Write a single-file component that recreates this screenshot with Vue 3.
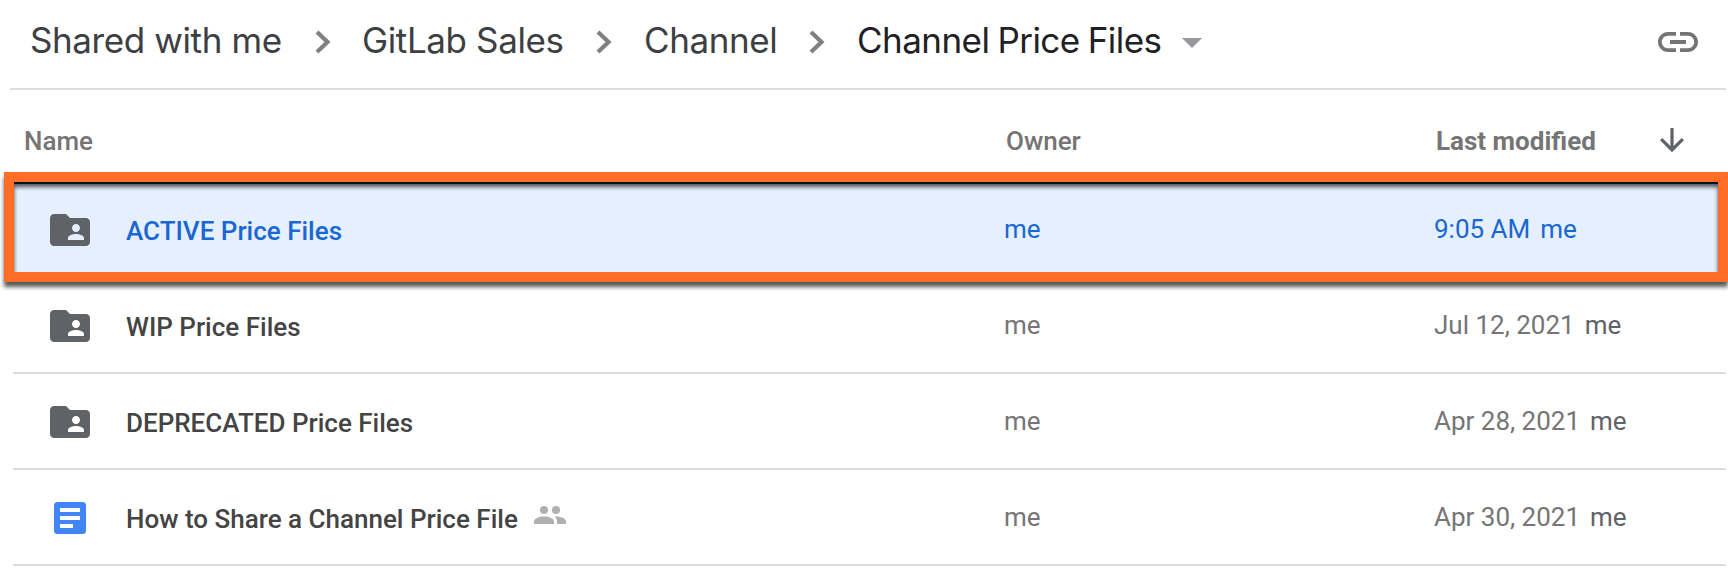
<script setup>
const crumbs = [
  { label: 'Shared with me', cls: 'c1' },
  { label: 'GitLab Sales', cls: 'c2' },
  { label: 'Channel', cls: 'c3' },
  { label: 'Channel Price Files', cls: 'c4' },
]
const files = [
  { name: 'ACTIVE Price Files', type: 'folder', owner: 'me', date: '9:05 AM', by: 'me', selected: true },
  { name: 'WIP Price Files', type: 'folder', owner: 'me', date: 'Jul 12, 2021', by: 'me' },
  { name: 'DEPRECATED Price Files', type: 'folder', owner: 'me', date: 'Apr 28, 2021', by: 'me' },
  { name: 'How to Share a Channel Price File', type: 'doc', owner: 'me', date: 'Apr 30, 2021', by: 'me', shared: true },
]
</script>

<template>
  <main class="drive">
    <header class="topbar">
      <nav class="crumbs">
        <div v-for="(c, i) in crumbs" :key="c.label" class="crumb" :class="c.cls">
          <span class="label">{{ c.label }}</span>
          <svg v-if="i < 3" class="chevron" width="16" height="24" viewBox="0 0 16 24">
            <path d="M2 2 12.500 12 2 22" fill="none" stroke="#808080" stroke-width="4.200" />
          </svg>
          <svg v-else class="caret" width="20" height="10" viewBox="0 0 20 10">
            <path d="M0 0h20L10 10z" fill="#96989c" />
          </svg>
        </div>
      </nav>
      <svg class="link" width="48" height="48" viewBox="0 0 24 24">
        <path fill="#757575" d="M3.9 12c0-1.71 1.39-3.1 3.1-3.1h4V7H7c-2.76 0-5 2.24-5 5s2.24 5 5 5h4v-1.9H7c-1.71 0-3.1-1.39-3.1-3.1zM8 13h8v-2H8v2zm9-6h-4v1.9h4c1.71 0 3.1 1.39 3.1 3.1s-1.39 3.1-3.1 3.1h-4V17h4c2.76 0 5-2.24 5-5s-2.24-5-5-5z" />
      </svg>
    </header>

    <div class="columns">
      <span>Name</span>
      <span class="h-owner">Owner</span>
      <span class="h-mod">Last modified</span>
      <svg width="24" height="25" viewBox="0 0 24 25">
        <path d="M12 0v22M1.2 11.2 12 22l10.8-10.8" fill="none" stroke="#5f6368" stroke-width="3.2" />
      </svg>
    </div>

    <section class="list">
      <div v-for="f in files" :key="f.name" class="row" :class="{ selected: f.selected }">
        <div class="icon">
          <svg v-if="f.type === 'folder'" width="48" height="48" viewBox="0 0 24 24">
            <path fill="#5f6368" d="M20 6h-8l-2-2H4c-1.1 0-1.99.9-1.99 2L2 18c0 1.1.9 2 2 2h16c1.1 0 2-.9 2-2V8c0-1.1-.9-2-2-2zm-5 3c1.1 0 2 .9 2 2s-.9 2-2 2-2-.9-2-2 .9-2 2-2zm4 8h-8v-1c0-1.33 2.67-2 4-2s4 .67 4 2v1z" />
          </svg>
          <svg v-else width="32" height="32" viewBox="0 0 32 32">
            <rect width="32" height="32" rx="3.5" fill="#4285f4" />
            <path d="M6 6h20v4H6zM6 14h20v4H6zM6 22h13v4H6z" fill="#fff" />
          </svg>
        </div>
        <div class="name">
          <span>{{ f.name }}</span>
          <svg v-if="f.shared" class="people" width="32" height="18" viewBox="0 0 32 18">
            <g fill="#b0b0b0">
              <circle cx="10" cy="4" r="4" />
              <circle cx="22" cy="4" r="4" />
              <path d="M0 18v-2.4C0 12.200 5.500 10.500 10 10.500s10 1.700 10 5.100V18z" />
              <path d="M20.500 10.600C26 10.300 32 12.200 32 15.600V18h-9v-2.400c0-2.200-1-3.800-2.500-5z" />
            </g>
          </svg>
        </div>
        <div class="owner">{{ f.owner }}</div>
        <div class="mod"><span>{{ f.date }}</span><span class="by">{{ f.by }}</span></div>
      </div>
      <div class="highlight"></div>
    </section>
  </main>
</template>

<style>
html, body { margin: 0; background: #fff; overflow: hidden; }
</style>

<style scoped>
.drive {
  width: 1728px;
  height: 574px;
  overflow: hidden;
  background: #fff;
  font-family: Roboto, sans-serif;
  font-size: 26px;
  color: #757575;
}
svg { display: block; flex: none; }
.topbar {
  box-sizing: border-box;
  height: 90px;
  margin: 0 2px 0 10px;
  padding: 0 24px 6px 20px;
  border-bottom: 2px solid #dbdbe0;
  display: flex;
  align-items: center;
  justify-content: space-between;
}
.crumbs {
  display: flex;
  font-family: Inter, sans-serif;
  font-size: 35px;
  line-height: 44px;
  color: #3c4043;
}
.crumb { display: flex; align-items: center; white-space: nowrap; }
.c1 { width: 332px; letter-spacing: -0.4px; }
.c2 { width: 282px; letter-spacing: -0.38px; }
.c3 { width: 213px; letter-spacing: -0.4px; }
.c4 { color: #202124; letter-spacing: -0.55px; word-spacing: -1.2px; }
.label { flex: none; padding-bottom: 3px; }
.c1 .label { width: 285px; }
.c2 .label { width: 234px; }
.c3 .label { width: 165px; }
.c4 .label { width: 325px; }
.caret { margin-top: 3px; }
.chevron { margin-top: 1px; }
.link { margin-top: 2px; }
.columns {
  height: 92px;
  display: grid;
  grid-template-columns: 982px 430px 224px 24px;
  align-items: center;
  padding: 0 0 0 24px;
  box-sizing: border-box;
  font-weight: 500;
}
.columns span { padding-top: 9px; }
.columns svg { margin-top: 9px; }
.h-mod { font-weight: 700; }
.list { position: relative; }
.row {
  box-sizing: border-box;
  height: 96px;
  margin: 0 2px 0 13px;
  padding-top: 2px;
  border-bottom: 2px solid #dbdbe0;
  display: grid;
  grid-template-columns: 113px 878px 430px 1fr;
  align-items: center;
}
.icon { box-sizing: border-box; padding-left: 1px; display: flex; justify-content: center; }
.name { display: flex; align-items: center; padding-top: 2px; font-weight: 500; color: #444; }
.people { margin: -9px 0 0 16px; }
.owner, .mod { padding-bottom: 2px; }
.by { margin-left: 10px; color: #5f6368; }
.selected { background: #e6effe; border-top: 2px solid #0b2a5c; border-bottom: 0; margin-right: 10px; padding: 0 0 2px; }
.selected .name, .selected .owner, .selected .mod, .selected .by { color: #1967d2; }
.highlight {
  position: absolute;
  left: 4px;
  top: -10px;
  width: 1724px;
  height: 110px;
  box-sizing: border-box;
  border: 10px solid #ff6d26;
  filter: drop-shadow(0 5px 2px rgba(0, 0, 0, 0.65));
}
</style>
